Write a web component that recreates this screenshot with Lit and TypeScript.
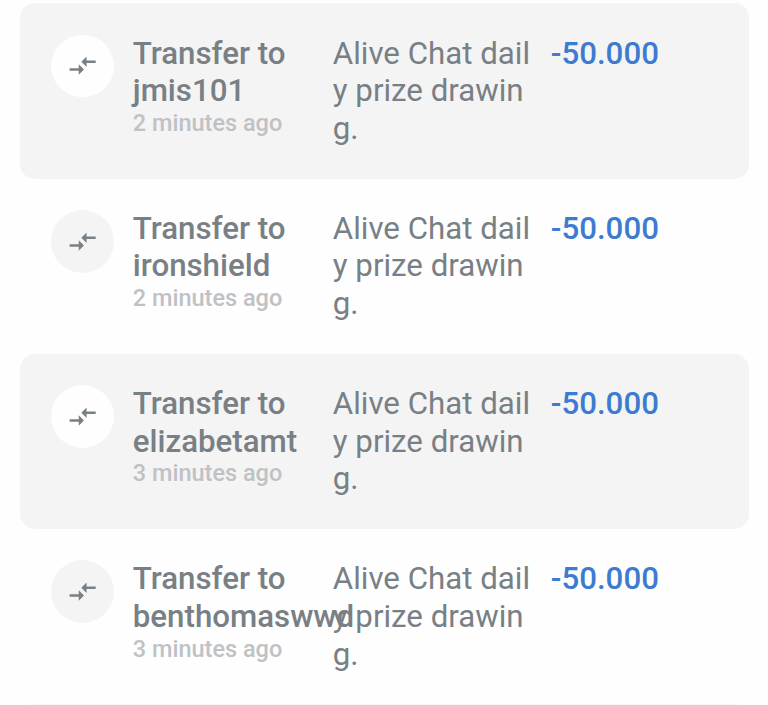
import {LitElement, html, css} from 'lit';
import {customElement, property} from 'lit/decorators.js';

interface Transfer {
  to: string;
  time: string;
  memo: string;
  amount: string;
}

const MEMO = 'Alive Chat daily prize drawing.';

const TRANSFERS: Transfer[] = [
  {to: 'jmis101', time: '2 minutes ago', memo: MEMO, amount: '-50.000'},
  {to: 'ironshield', time: '2 minutes ago', memo: MEMO, amount: '-50.000'},
  {to: 'elizabetamt', time: '3 minutes ago', memo: MEMO, amount: '-50.000'},
  {to: 'benthomaswwd', time: '3 minutes ago', memo: MEMO, amount: '-50.000'},
];

@customElement('transfer-row')
export class TransferRow extends LitElement {
  static styles = css`
    :host {
      display: grid;
      grid-template-columns: 82px 200px 218px 1fr;
      box-sizing: border-box;
      height: 175.2px;
      padding: 31.2px 31px 31px 30.8px;
      border-radius: 15px;
      color: #788085;
      font-size: 31.25px;
      line-height: 37.7px;
    }
    .icon {
      display: flex;
      align-items: center;
      justify-content: center;
      width: 62.8px;
      height: 62.8px;
      border-radius: 50%;
      background: var(--icon-bg, #f4f4f4);
    }
    .icon svg {
      width: 31.3px;
      height: 31.3px;
      margin-left: 0.7px;
      fill: #788085;
    }
    .title {
      width: 170px;
      font-weight: 500;
    }
    .time {
      color: #bfc2c5;
      font-size: 23.5px;
      font-weight: 500;
      line-height: 27.2px;
    }
    .memo {
      width: 202px;
      word-break: break-all;
    }
    .amount {
      color: #3d7bd0;
      font-weight: 500;
    }
  `;

  @property({attribute: false}) transfer!: Transfer;

  render() {
    const {to, time, memo, amount} = this.transfer;
    return html`
      <div class="icon">
        <svg viewBox="0 0 24 24">
          <path d="M9.01 14H2v2h7.01v3L13 15l-3.99-4v3zm5.98-1v-3H22V8h-7.01V5L11 9l3.99 4z" />
        </svg>
      </div>
      <div>
        <div class="title">Transfer to ${to}</div>
        <div class="time">${time}</div>
      </div>
      <div class="memo">${memo}</div>
      <div class="amount">${amount}</div>
    `;
  }
}

@customElement('app-root')
export class AppRoot extends LitElement {
  static styles = css`
    :host {
      display: block;
      box-sizing: border-box;
      height: 705px;
      padding: 3.4px 19px 0 20px;
      overflow: hidden;
      background: #fefefe;
      font-family: Roboto, sans-serif;
    }
    transfer-row:nth-of-type(odd) {
      --icon-bg: #fefefe;
      background: #f4f4f4;
    }
    .next {
      height: 175.2px;
      border-radius: 15px;
      background: #f4f4f4;
    }
  `;

  render() {
    return html`
      ${TRANSFERS.map((t) => html`<transfer-row .transfer=${t}></transfer-row>`)}
      <div class="next"></div>
    `;
  }
}
